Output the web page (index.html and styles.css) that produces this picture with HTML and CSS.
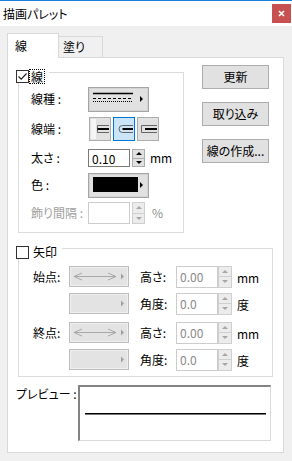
FILE: index.html
```html
<!DOCTYPE html>
<html lang="ja">
<head>
    <meta charset="UTF-8">
    <meta name="viewport" content="width=device-width, initial-scale=1.0">
    <title>描画パレット</title>
    <link rel="stylesheet" href="styles.css">
</head>
<body>
    <div class="window">
        <div class="titlebar">
            <span class="title">描画パレット</span>
            <button class="close-btn" title="閉じる">
                <svg width="7" height="7" viewBox="0 0 7 7"><path d="M1 1L6 6M6 1L1 6" stroke="#fff" stroke-width="1.6"/></svg>
            </button>
        </div>

        <div class="client">
            <div class="tabs">
                <div class="tab active">線</div>
                <div class="tab">塗り</div>
            </div>

            <div class="panel">
                <div class="top-section">
                    <!-- 線 -->
                    <div class="group line-group">
                        <div class="group-head">
                            <span class="check">
                                <svg width="11" height="11" viewBox="0 0 11 11"><path d="M1.5 5.5L4.2 8.2L9.5 2.5" fill="none" stroke="#222" stroke-width="1.2"/></svg>
                            </span>
                            <span class="focus-label">線</span>
                        </div>
                        <div class="form-grid">
                            <span class="label">線種 :</span>
                            <button class="pick-btn">
                                <svg width="59" height="23" viewBox="0 0 59 23">
                                    <line x1="4" y1="5.5" x2="44" y2="5.5" stroke="#000" stroke-width="1.6"/>
                                    <line x1="4" y1="10.5" x2="44" y2="10.5" stroke="#000" stroke-dasharray="3 2"/>
                                    <line x1="4" y1="13.5" x2="44" y2="13.5" stroke="#000" stroke-dasharray="1 1"/>
                                    <path d="M51 8L54 11L51 14Z" fill="#000"/>
                                </svg>
                            </button>

                            <span class="label">線端 :</span>
                            <div class="cap-buttons">
                                <button class="cap-btn">
                                    <svg width="20" height="22" viewBox="0 0 20 22">
                                        <rect x="1" y="1" width="5" height="20" fill="#f4f4f4"/>
                                        <path d="M19 7.5H7.5V14.5H19" fill="none" stroke="#666"/>
                                        <path d="M7.5 11H19" stroke="#000" stroke-width="2"/>
                                    </svg>
                                </button>
                                <button class="cap-btn selected">
                                    <svg width="20" height="22" viewBox="0 0 20 22">
                                        <path d="M19 7.5H8.5A3.5 3.5 0 0 0 8.5 14.5H19" fill="none" stroke="#666"/>
                                        <path d="M8.5 11H19" stroke="#000" stroke-width="2"/>
                                    </svg>
                                </button>
                                <button class="cap-btn">
                                    <svg width="20" height="22" viewBox="0 0 20 22">
                                        <path d="M19 7.5H3.5V14.5H19" fill="none" stroke="#666"/>
                                        <path d="M7 11H19" stroke="#000" stroke-width="2"/>
                                    </svg>
                                </button>
                            </div>

                            <span class="label">太さ :</span>
                            <div class="field">
                                <input class="num" value="0.10">
                                <span class="spin"><span class="spin-up"></span><span class="spin-down"></span></span>
                                <span class="unit">mm</span>
                            </div>

                            <span class="label">色 :</span>
                            <button class="pick-btn">
                                <svg width="59" height="23" viewBox="0 0 59 23">
                                    <rect x="4" y="3" width="45" height="15" fill="#000"/>
                                    <path d="M51 8L54 11L51 14Z" fill="#000"/>
                                </svg>
                            </button>

                            <span class="label disabled">飾り間隔 :</span>
                            <div class="field">
                                <input class="num tall" disabled>
                                <span class="spin tall disabled"><span class="spin-up"></span><span class="spin-down"></span></span>
                                <span class="unit percent">%</span>
                            </div>
                        </div>
                    </div>

                    <div class="side-buttons">
                        <button class="btn">更新</button>
                        <button class="btn">取り込み</button>
                        <button class="btn">線の作成...</button>
                    </div>
                </div>

                <!-- 矢印 -->
                <div class="group arrow-group">
                    <div class="group-head">
                        <span class="check"></span>
                        <span class="head-label">矢印</span>
                    </div>

                    <div class="point">
                        <span class="label">始点:</span>
                        <button class="combo" disabled>
                            <svg width="58" height="19" viewBox="0 0 58 19">
                                <path d="M4 9.5H46M4 9.5L12 6M4 9.5L12 13M46 9.5L38 6M46 9.5L38 13" fill="none" stroke="#a8a8a8"/>
                                <path d="M51 6.5L54 9.5L51 12.5Z" fill="#a0a0a0"/>
                            </svg>
                        </button>
                        <span class="label">高さ:</span>
                        <input class="num" disabled value="0.00">
                        <span class="spin disabled"><span class="spin-up"></span><span class="spin-down"></span></span>
                        <span class="unit low">mm</span>

                        <span></span>
                        <button class="combo" disabled>
                            <svg width="58" height="19" viewBox="0 0 58 19"><path d="M51 6.5L54 9.5L51 12.5Z" fill="#a0a0a0"/></svg>
                        </button>
                        <span class="label">角度:</span>
                        <input class="num" disabled value="0.0">
                        <span class="spin disabled"><span class="spin-up"></span><span class="spin-down"></span></span>
                        <span class="unit low">度</span>
                    </div>

                    <div class="point">
                        <span class="label">終点:</span>
                        <button class="combo" disabled>
                            <svg width="58" height="19" viewBox="0 0 58 19">
                                <path d="M4 9.5H46M4 9.5L12 6M4 9.5L12 13M46 9.5L38 6M46 9.5L38 13" fill="none" stroke="#a8a8a8"/>
                                <path d="M51 6.5L54 9.5L51 12.5Z" fill="#a0a0a0"/>
                            </svg>
                        </button>
                        <span class="label">高さ:</span>
                        <input class="num" disabled value="0.00">
                        <span class="spin disabled"><span class="spin-up"></span><span class="spin-down"></span></span>
                        <span class="unit">mm</span>

                        <span></span>
                        <button class="combo" disabled>
                            <svg width="58" height="19" viewBox="0 0 58 19"><path d="M51 6.5L54 9.5L51 12.5Z" fill="#a0a0a0"/></svg>
                        </button>
                        <span class="label">角度:</span>
                        <input class="num" disabled value="0.0">
                        <span class="spin disabled"><span class="spin-up"></span><span class="spin-down"></span></span>
                        <span class="unit">度</span>
                    </div>
                </div>

                <div class="preview-row">
                    <span class="preview-label">プレビュー :</span>
                    <div class="preview"><span class="preview-line"></span></div>
                </div>
            </div>
        </div>
    </div>
</body>
</html>
```

FILE: styles.css
```css
* {
    margin: 0;
    padding: 0;
    box-sizing: border-box;
}

body {
    width: 292px;
    height: 461px;
    overflow: hidden;
    background-color: #f0f0f0;
    font-family: "Noto Sans CJK JP", "Noto Sans", sans-serif;
    font-size: 12px;
    line-height: 16px;
    color: #000;
    font-feature-settings: "palt";
}

button,
input {
    font: inherit;
    color: inherit;
}

.window {
    height: 461px;
    display: flex;
    flex-direction: column;
    border-top: 1px solid #1c7fd6;
}

/* タイトルバー */
.titlebar {
    height: 25px;
    background-color: #fff;
    display: flex;
    align-items: center;
    justify-content: space-between;
    padding-left: 3px;
}

.close-btn {
    width: 19px;
    height: 19px;
    margin-right: 1px;
    border: none;
    background-color: #c75050;
    display: flex;
    justify-content: center;
    align-items: center;
}

.client {
    flex: 1;
    display: flex;
    flex-direction: column;
    padding: 7px 8px 8px 7px;
}

/* タブ */
.tabs {
    height: 24px;
    display: flex;
    align-items: flex-end;
}

.tab {
    width: 44px;
    height: 21px;
    padding: 2px 0 0 4px;
    border: 1px solid #d9d9d9;
    border-left: none;
    border-bottom: none;
    background-color: #f0f0f0;
}

.tab.active {
    position: relative;
    z-index: 1;
    width: 52px;
    height: 25px;
    margin-bottom: -1px;
    padding: 4px 0 0 7px;
    border-left: 1px solid #d9d9d9;
    background-color: #fff;
}

.panel {
    flex: 1;
    display: flex;
    flex-direction: column;
    background-color: #fff;
    border: 1px solid #d9d9d9;
}

.top-section {
    display: flex;
    align-items: flex-start;
}

/* グループボックス */
.group {
    border: 1px solid #dcdcdc;
}

.group-head {
    width: fit-content;
    height: 14px;
    margin: -4px 0 0 -3px;
    padding-right: 5px;
    display: flex;
    align-items: center;
    gap: 1px;
    background-color: #fff;
}

.check {
    width: 13px;
    height: 13px;
    border: 1px solid #333;
    background-color: #fff;
    display: flex;
    justify-content: center;
    align-items: center;
}

.focus-label {
    line-height: 12px;
    padding: 1px 1px 0;
    outline: 1px dotted #000;
}

.head-label {
    margin-left: 3px;
}

.line-group {
    width: 166px;
    margin: 14px 0 0 10px;
    padding-bottom: 4px;
}

.form-grid {
    margin-top: 1px;
    padding-left: 12px;
    display: grid;
    grid-template-columns: 57px 1fr;
    grid-template-rows: 30px 30px 28px 26px 30px;
    align-items: center;
}

.label.disabled {
    color: #a0a0a0;
}

.pick-btn {
    width: 61px;
    height: 25px;
    border: 1px solid #a5a5a5;
    background-color: #e1e1e1;
    box-shadow: inset 0 0 0 1px #d4d4d4;
    display: flex;
}

.cap-buttons {
    display: flex;
    gap: 2px;
    margin-left: 1px;
}

.cap-btn {
    width: 22px;
    height: 24px;
    border: 1px solid #adadad;
    background-color: #e1e1e1;
    display: flex;
}

.cap-btn.selected {
    border-color: #0078d7;
    background-color: #cce4f7;
}

.field {
    display: flex;
    align-items: center;
}

.num {
    width: 42px;
    height: 18px;
    padding: 0 3px;
    border: 1px solid #7a7a7a;
    background-color: #fff;
    outline: none;
}

.num.tall {
    height: 22px;
}

.num:disabled {
    border-color: #cccccc;
    color: #8a8a8a;
    -webkit-text-fill-color: #8a8a8a;
    opacity: 1;
}

/* スピンボタン */
.spin {
    width: 13px;
    height: 18px;
    margin-left: 2px;
    display: flex;
    flex-direction: column;
}

.spin.tall {
    height: 22px;
}

.spin > span {
    flex: 1;
    display: flex;
    justify-content: center;
    align-items: center;
    background-color: #e1e1e1;
    border: 1px solid #adadad;
}

.spin > .spin-down {
    border-top: none;
}

.spin-up::after {
    content: "";
    border-left: 3px solid transparent;
    border-right: 3px solid transparent;
    border-bottom: 3px solid #000;
}

.spin-down::after {
    content: "";
    border-left: 3px solid transparent;
    border-right: 3px solid transparent;
    border-top: 3px solid #000;
}

.spin.disabled > span {
    background-color: #ececec;
    border-color: #cfcfcf;
}

.spin.disabled .spin-up::after {
    border-bottom-color: #a6a6a6;
}

.spin.disabled .spin-down::after {
    border-top-color: #a6a6a6;
}

.unit {
    margin-left: 5px;
}

.unit.percent {
    margin-left: 7px;
    color: #8d8d8d;
}

/* 右側ボタン */
.side-buttons {
    margin: 7px 0 0 18px;
    display: flex;
    flex-direction: column;
    gap: 13px;
}

.btn {
    width: 67px;
    height: 24px;
    border: 1px solid #adadad;
    background-color: #e1e1e1;
}

/* 矢印 */
.arrow-group {
    margin: 15px 10px 0;
    padding-bottom: 5px;
}

.point {
    margin-top: 6px;
    padding-left: 14px;
    display: grid;
    grid-template-columns: 36px 71px 36px 42px 14px auto;
    grid-template-rows: 23px 23px;
    row-gap: 4px;
    align-items: center;
}

.point .num {
    height: 22px;
}

.point .spin {
    width: 14px;
    height: 22px;
    margin-left: 0;
}

.point .unit {
    padding-top: 3px;
}

.combo {
    width: 60px;
    height: 21px;
    border: 1px solid #bdbdbd;
    background-color: #e3e3e3;
    box-shadow: inset 0 0 0 1px #efefef;
    display: flex;
}

/* プレビュー */
.preview-row {
    margin: 8px 0 0 8px;
    display: flex;
    align-items: flex-start;
}

.preview-label {
    width: 62px;
    padding-top: 1px;
}

.preview {
    width: 193px;
    height: 56px;
    padding: 0 4px 0 5px;
    border-style: solid;
    border-width: 2px 1px 1px 2px;
    border-color: #838383 #dadada #dadada #838383;
    display: flex;
    align-items: center;
}

.preview-line {
    flex: 1;
    height: 2px;
    border-top: 1px solid #000;
    background-color: #777;
}
```
